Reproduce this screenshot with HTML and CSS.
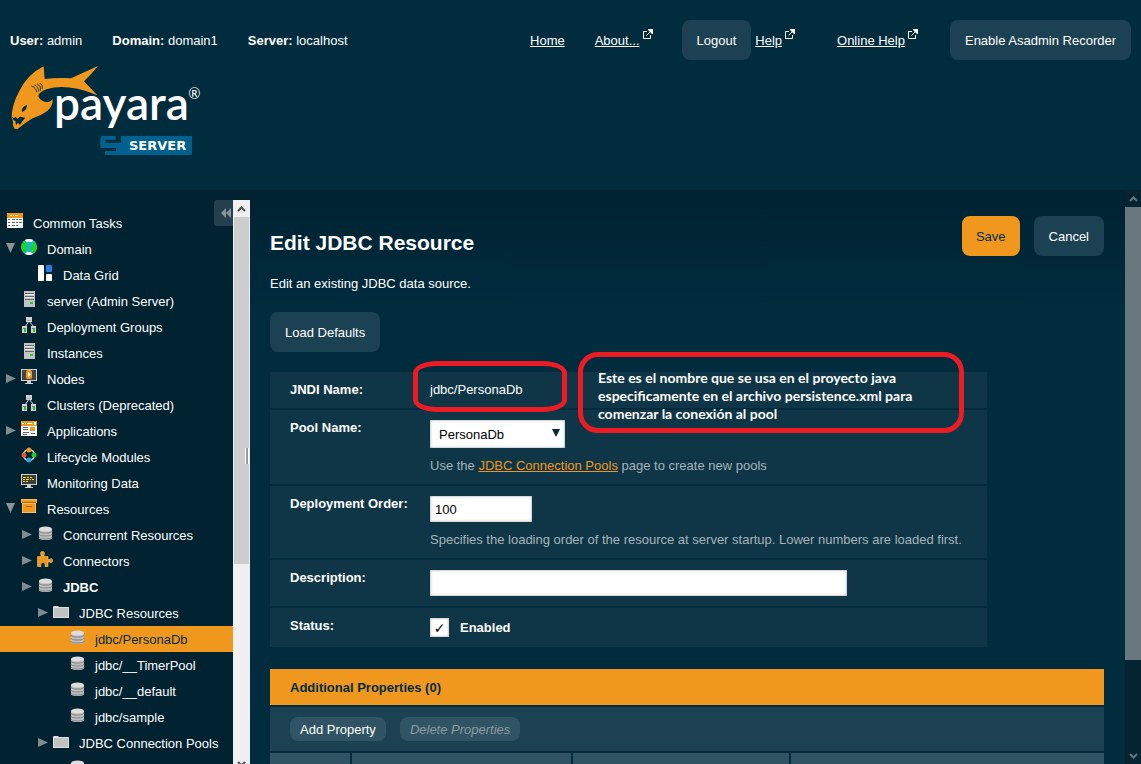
FILE: index.html
```html
<!DOCTYPE html>
<html lang="en">
<head>
<meta charset="utf-8">
<title>Edit JDBC Resource</title>
<link rel="stylesheet" href="styles.css">
</head>
<body>
<svg class="symbols" aria-hidden="true">
  <symbol id="i-tasks" viewBox="0 0 16 16"><path fill="#fff" d="M0 0h16v15H0z"/><path fill="#f0981d" d="M0 0h16v5H0z"/><path fill="#fbd9a0" d="M3 2h2v1H3zM6 2h1v1H6zM8 2h3v1H8z"/><path fill="#666" d="M1 6h2v1H1zM5 6h3v1H5zM9 6h2v1H9zM12 6h3v1h-3zM1 9h2v1H1zM5 9h3v1H5zM9 9h2v1H9zM12 9h3v1h-3zM1 12h2v1H1zM5 12h3v1H5zM9 12h2v1H9z"/></symbol>
  <symbol id="i-globe" viewBox="0 0 16 16"><circle cx="8" cy="8" r="8" fill="#1fb0e8"/><path fill="#18d818" d="M1 5l3-3 3 2-1 3-1 2 2 2-2 3-3-2-2-3zM11 3l2 0 2 3 1 3-2 4-3 1-1-3-1-2 2-2z"/><path fill="#fff" d="M4 1q4-2 8 0l-1 2H5zM4 15q4 2 8 0l-2-2H6z"/></symbol>
  <symbol id="i-grid" viewBox="0 0 16 16"><rect x="1" width="6" height="16" rx="1" fill="#fff"/><rect x="9" width="6" height="7" rx="1" fill="#2a7de1"/><rect x="9" y="9" width="6" height="7" rx="1" fill="#fff"/></symbol>
  <symbol id="i-server" viewBox="0 0 16 16"><path fill="#c4c4c4" d="M3 0h11v16H3z"/><path fill="#666" d="M4 2h9v1H4zM4 5h9v1H4zM4 8h9v1H4z"/><path fill="#eee" d="M4 3h9v1H4zM4 6h9v1H4z"/><path fill="#1fce1f" d="M9 11h3v2H9z"/></symbol>
  <symbol id="i-group" viewBox="0 0 16 16"><path d="M8 4L4 10M8 4l5 6" stroke="#ddd" stroke-width="1" fill="none"/><path fill="#d2d2d2" d="M5 0h6v5H5zM1 9h5v7H1zM10 9h5v7h-5z"/><path fill="#777" d="M2 11h3v1H2zM11 11h3v1h-3z"/><path fill="#aaa" d="M6 3h4v1H6z"/><path fill="#1c1" d="M3 12h2v3H3zM12 12h2v3h-2z"/></symbol>
  <symbol id="i-node" viewBox="0 0 16 16"><path fill="#cfcfcf" d="M0 0h16v12H0zM6 12h4v2h2v1H4v-1h2z"/><path fill="#444" d="M1 1h14v10H1z"/><rect x="5" y="1" width="6" height="9" rx="2" fill="#f0981d"/><path fill="#fff" d="M7 3l3 2.500L7 8z"/></symbol>
  <symbol id="i-app" viewBox="0 0 16 16"><path fill="#fff" d="M0 0h16v15H0z"/><path fill="#f0981d" d="M0 0h16v5H0zM9 6h5v4H9z"/><path fill="#fff" d="M1 2h2v1H1zM4 2h1v1H4zM6 2h5v1H6zM13 1h2v3h-2z"/><path fill="#666" d="M2 6h5v1H2zM2 8h5v1H2zM2 11h6v1H2zM2 13h4v1H2zM10 12h4v1h-4z"/></symbol>
  <symbol id="i-life" viewBox="0 0 16 16"><circle cx="8" cy="8" r="5.500" fill="none" stroke="#ccc" stroke-width="1.500"/><circle cx="8" cy="3" r="2.500" fill="#f0981d"/><circle cx="13" cy="8" r="2.500" fill="#1dce28"/><circle cx="8" cy="13" r="2.500" fill="#20a8e8"/><circle cx="3" cy="8" r="2.500" fill="#f0562a"/></symbol>
  <symbol id="i-monitor" viewBox="0 0 16 16"><path fill="#cfcfcf" d="M0 1h16v11H0zM6 12h4v2h2v1H4v-1h2z"/><path fill="#3d3d3d" d="M1 2h14v9H1z"/><path fill="#ffe000" d="M2 4h3v1H2zM6 4h2v1H6zM9 4h2v1H9zM2 6h2v1H2zM5 6h3v1H5zM9 6h1v1H9zM11 6h2v1h-2zM2 8h2v1H2zM5 8h2v1H5z"/></symbol>
  <symbol id="i-box" viewBox="0 0 16 16"><path fill="#f9bd63" d="M0 0h16v4h-1v10H1V4H0z"/><path fill="#f0981d" d="M1 1h14v2H1zM2 5h12v8H2z"/><path fill="#b06c0c" d="M1 3h14v1H1zM5 7h6v1H5z"/></symbol>
  <symbol id="i-db" viewBox="0 0 16 16"><path fill="#bdbdbd" d="M2 4v9q0 2 6.500 2t6.500-2V4z"/><ellipse cx="8.500" cy="4" rx="6.500" ry="2.500" fill="#dedede"/><path fill="none" stroke="#858585" d="M2 6q0 2 6.500 2T15 6M2 9q0 2 6.500 2T15 9M2 12q0 2 6.500 2t6.500-2"/></symbol>
  <symbol id="i-puzzle" viewBox="0 0 16 16"><path fill="#f0981d" stroke="#fbc77a" stroke-width=".6" d="M.5 5.500H4V4Q2.500.5 5.500.5T7 4v1.500h4v3h1.500Q15.500 6.500 15.500 9.500T12.500 11H11v4.500H8V14q1-2.500-2-2.500T4 14v1.500H.5z"/></symbol>
  <symbol id="i-folder" viewBox="0 0 16 16"><path fill="#dedede" d="M0 4q0-1 1-1h4l1 1h9q1 0 1 1v10H0z"/><path fill="#c2c2c2" d="M1 5h14v9H1z"/></symbol>
  <symbol id="i-ext" viewBox="0 0 10 10"><path fill="none" stroke="#fff" d="M4 2.500H.5v7h7V6M3.500 6.500L8 2"/><path fill="#fff" d="M5 0h5v5H9L5 1z"/></symbol>
  <symbol id="i-down" viewBox="0 0 10 10"><path fill="#8b9499" d="M0 0h9L4.500 10z"/></symbol>
  <symbol id="i-right" viewBox="0 0 10 10"><path fill="#7f8b90" d="M0 1l10 4.500L0 10z"/></symbol>
  <symbol id="i-up" viewBox="0 0 9 6"><path fill="none" stroke="currentColor" stroke-width="2" d="M1 5l3.500-3.500L8 5"/></symbol>
</svg>

<header class="top">
  <div class="bar">
    <dl class="who">
      <div><dt>User:</dt> <dd>admin</dd></div>
      <div><dt>Domain:</dt> <dd>domain1</dd></div>
      <div><dt>Server:</dt> <dd>localhost</dd></div>
    </dl>
    <nav class="links">
      <a href="#">Home</a>
      <a class="ext about" href="#">About...<svg><use href="#i-ext"/></svg></a>
      <button class="btn" type="button">Logout</button>
      <a class="ext help" href="#">Help<svg><use href="#i-ext"/></svg></a>
      <a class="ext online" href="#">Online Help<svg><use href="#i-ext"/></svg></a>
      <button class="btn" type="button">Enable Asadmin Recorder</button>
    </nav>
  </div>
  <svg class="logo" viewBox="30 27 582 282" role="img" aria-label="Payara Server">
    <path fill="#f0981d" d="M131 34L134 72Q175 67 213 70Q252 52 294 33Q272 60 252 79Q270 98 292 121Q262 107 233 101Q178 91 142 102Q116 110 115 124Q120 138 138 141Q151 143 158 132Q160 152 142 168Q120 184 98 190Q72 205 53 222L43 221L38 207L40 206L38 196L35 186Q36 148 58 108Q82 58 131 34Z"/>
    <path fill="#002c3e" d="M65 166Q68 154 81 150Q81 165 67 171ZM36 186L42 189L46 186L52 191L60 185L76 188Q66 198 60 210L54 203L48 211L46 198L41 196Z"/>
    <path fill="none" stroke="#002c3e" stroke-width="2.500" d="M94 93Q109 98 110 111M103 90Q117 95 116 110M111 87Q124 92 121 107M119 85Q130 89 126 102"/>
    <text class="word" x="162" y="194">payara</text>
    <text class="reg" x="565" y="132">®</text>
    <path fill="#00618f" d="M304 243h43v11h-30v9h46v-20h210q3 0 3 3v51q0 3-3 3H315v-12h33v-9h-45q-2 0-2-3v-27q0-3 3-3z"/>
    <text class="server" x="387" y="286">SERVER</text>
  </svg>
</header>

<div class="body">
  <aside class="side">
    <button class="collapse" type="button" aria-label="Collapse"><svg viewBox="0 0 10 10"><path d="M5 0v10L0 5zM10 0v10L5 5z"/></svg></button>
    <ul class="tree">
      <li class="root"><svg class="ico"><use href="#i-tasks"/></svg><a href="#">Common Tasks</a></li>
      <li><svg class="arr"><use href="#i-down"/></svg><svg class="ico"><use href="#i-globe"/></svg><a href="#">Domain</a></li>
      <li class="l2"><svg class="ico"><use href="#i-grid"/></svg><a href="#">Data Grid</a></li>
      <li class="l1"><svg class="ico"><use href="#i-server"/></svg><a href="#">server (Admin Server)</a></li>
      <li class="l1"><svg class="ico"><use href="#i-group"/></svg><a href="#">Deployment Groups</a></li>
      <li class="l1"><svg class="ico"><use href="#i-server"/></svg><a href="#">Instances</a></li>
      <li><svg class="arr"><use href="#i-right"/></svg><svg class="ico"><use href="#i-node"/></svg><a href="#">Nodes</a></li>
      <li class="l1"><svg class="ico"><use href="#i-group"/></svg><a href="#">Clusters (Deprecated)</a></li>
      <li><svg class="arr"><use href="#i-right"/></svg><svg class="ico"><use href="#i-app"/></svg><a href="#">Applications</a></li>
      <li class="l1"><svg class="ico"><use href="#i-life"/></svg><a href="#">Lifecycle Modules</a></li>
      <li class="l1"><svg class="ico"><use href="#i-monitor"/></svg><a href="#">Monitoring Data</a></li>
      <li><svg class="arr"><use href="#i-down"/></svg><svg class="ico"><use href="#i-box"/></svg><a href="#">Resources</a></li>
      <li class="l1"><svg class="arr"><use href="#i-right"/></svg><svg class="ico"><use href="#i-db"/></svg><a href="#">Concurrent Resources</a></li>
      <li class="l1"><svg class="arr"><use href="#i-right"/></svg><svg class="ico"><use href="#i-puzzle"/></svg><a href="#">Connectors</a></li>
      <li class="l1 open"><svg class="arr"><use href="#i-right"/></svg><svg class="ico"><use href="#i-db"/></svg><a href="#">JDBC</a></li>
      <li class="l2"><svg class="arr"><use href="#i-right"/></svg><svg class="ico"><use href="#i-folder"/></svg><a href="#">JDBC Resources</a></li>
      <li class="l4 on"><svg class="ico"><use href="#i-db"/></svg><a href="#">jdbc/PersonaDb</a></li>
      <li class="l4"><svg class="ico"><use href="#i-db"/></svg><a href="#">jdbc/__TimerPool</a></li>
      <li class="l4"><svg class="ico"><use href="#i-db"/></svg><a href="#">jdbc/__default</a></li>
      <li class="l4"><svg class="ico"><use href="#i-db"/></svg><a href="#">jdbc/sample</a></li>
      <li class="l2"><svg class="arr"><use href="#i-right"/></svg><svg class="ico"><use href="#i-folder"/></svg><a href="#">JDBC Connection Pools</a></li>
      <li class="l4"><svg class="ico"><use href="#i-db"/></svg></li>
    </ul>
    <div class="scroll light"><svg class="cap"><use href="#i-up"/></svg><div class="thumb"></div><div class="grip"></div><svg class="cap end"><use href="#i-up"/></svg></div>
  </aside>

  <main class="main">
    <div class="head">
      <h1>Edit JDBC Resource</h1>
      <div class="actions"><button class="btn save" type="button">Save</button><button class="btn" type="button">Cancel</button></div>
    </div>
    <p class="intro">Edit an existing JDBC data source.</p>
    <button class="btn load" type="button">Load Defaults</button>

    <form class="form">
      <div class="row"><span class="lab">JNDI Name:</span><div class="val plain">jdbc/PersonaDb</div></div>
      <div class="row"><label class="lab" for="pool">Pool Name:</label>
        <div class="val"><div class="pick"><select id="pool"><option>PersonaDb</option></select><svg viewBox="0 0 8 8"><path d="M0 0h8L4 8z"/></svg></div>
        <p class="hint">Use the <a href="#">JDBC Connection Pools</a> page to create new pools</p></div></div>
      <div class="row"><label class="lab" for="order">Deployment Order:</label>
        <div class="val"><input class="field short" id="order" type="text" value="100">
        <p class="hint">Specifies the loading order of the resource at server startup. Lower numbers are loaded first.</p></div></div>
      <div class="row"><label class="lab" for="desc">Description:</label>
        <div class="val"><input class="field long" id="desc" type="text"></div></div>
      <div class="row"><span class="lab">Status:</span>
        <div class="val check"><input id="enabled" type="checkbox" checked><label for="enabled">Enabled</label></div></div>
      <div class="mark ring"></div>
      <div class="mark note">Este es el nombre que se usa en el proyecto java<br>especificamente en el archivo persistence.xml para<br>comenzar la conexión al pool</div>
    </form>

    <section class="props">
      <h2>Additional Properties (0)</h2>
      <div class="tools"><button class="mini" type="button">Add Property</button><button class="mini" type="button" disabled>Delete Properties</button></div>
      <div class="cols"><span></span><span></span><span></span><span></span></div>
    </section>
  </main>
  <div class="scroll dark"><svg class="cap"><use href="#i-up"/></svg><div class="thumb"></div><svg class="cap end"><use href="#i-up"/></svg></div>
</div>
</body>
</html>
```

FILE: styles.css
```css
* { box-sizing: border-box; }
body {
  margin: 0; height: 100vh; overflow: hidden;
  display: flex; flex-direction: column;
  background: #002c3e; color: #fff;
  font: 13px/17px "Liberation Sans", Arial, sans-serif;
}
button, input, select { font: inherit; color: inherit; border: 0; margin: 0; }
a { color: inherit; }
svg { display: block; flex: none; }
.symbols { position: absolute; width: 0; height: 0; }

.top { padding: 20px 10px 32px; flex: none; }
.bar { display: flex; justify-content: space-between; align-items: center; }
.who { display: flex; gap: 30px; margin: 0; }
.who dt, .who dd { display: inline; margin: 0; }
.who dt { font-weight: bold; }
.links { display: flex; align-items: center; }
.btn { height: 40px; padding: 0 15px; border-radius: 8px; background: #1c4152; white-space: nowrap; }
.save { background: #f0981d; color: #002c3e; padding: 0 14px; }
.ext { display: flex; }
.ext svg { width: 10px; height: 10px; margin: -3px 0 0 3px; }
.about { margin: 0 29px 0 30px; }
.help { margin: 0 42px 0 4px; }
.online { margin-right: 32px; }
.logo { width: 194px; height: 94px; margin-top: 4px; }
.logo text { fill: #fff; }
.word { font: 600 138px Lato, sans-serif; }
.reg { font: 44px Lato, sans-serif; }
.server { font: bold 39px "DejaVu Sans", sans-serif; }

.body { flex: 1; min-height: 0; display: flex; background: linear-gradient(#002231, #002c3e 120px); }
.side { position: relative; width: 250px; flex: none; display: flex; background: #002231; }
.tree { list-style: none; margin: 0; padding: 20px 0 0; flex: 1; min-width: 0; overflow: hidden; }
.tree li { display: flex; height: 26px; padding-left: 5px; white-space: nowrap; }
.tree a { text-decoration: none; line-height: 28px; margin-left: 10px; }
.ico { width: 16px; height: 16px; margin-top: 3px; }
.arr { width: 10px; height: 10px; margin: 7px 5px 0 1px; }
.tree .root { padding-left: 7px; }
.tree .l1 { padding-left: 21px; }
.tree .l2 { padding-left: 37px; }
.tree .l4 { padding-left: 69px; }
.tree .open { font-weight: bold; }
.tree .on { background: #f0981d; color: #002c3e; }
.collapse { position: absolute; left: 214px; top: 10px; width: 26px; height: 26px; padding: 0 0 0 7px; border-radius: 3px; background: #24404e; }
.collapse svg { width: 10px; height: 10px; fill: #8b9499; }

.scroll { width: 17px; flex: none; display: flex; flex-direction: column; position: relative; }
.cap { width: 9px; height: 6px; margin: 6px auto 5px; }
.end { transform: rotate(180deg); margin-top: auto; }
.light { background: #f0f0f0; color: #505050; margin-top: 10px; }
.light .thumb { height: 347px; background: #cdcdcd; margin: 0 1px; }
.light .end { margin-bottom: -3px; }
.grip { position: absolute; right: 1px; top: 248px; width: 4px; height: 16px; border: solid #fff; border-width: 0 1px; background: #999; }
.dark { width: 16px; background: #052330; color: #69777e; }
.dark .thumb { height: 79%; background: #69777e; }

.main { flex: 1; min-width: 0; overflow: hidden; padding: 26px 21px 0 20px; }
.head { display: flex; justify-content: space-between; }
h1 { font-size: 21px; line-height: 24px; margin: 15px 0 0; }
.actions { display: flex; gap: 14px; }
.intro { margin: 19px 0 20px; }
.load { display: block; }
.form { position: relative; width: 86%; margin: 20px 0 22px; display: grid; gap: 2px; }
.row { display: flex; background: #0f3647; padding: 0 20px; }
.lab { width: 140px; flex: none; padding-top: 9px; font-weight: bold; }
.val { flex: 1; min-width: 0; padding: 10px 0; white-space: nowrap; }
.plain { padding-top: 9px; }
.field, .pick select, .check input { display: block; background: #fff; color: #000; border-radius: 0; box-shadow: inset 0 0 3px #999; }
.field { height: 26px; padding: 0 5px; }
.short { width: 102px; }
.long { width: 417px; max-width: 100%; }
.pick { position: relative; width: 135px; }
.pick select { appearance: none; width: 100%; height: 28px; padding: 0 9px; }
.pick svg { position: absolute; right: 5px; top: 9px; width: 8px; height: 8px; fill: #002c3e; }
.hint { margin: 9px 0 0; color: #a5b4bb; }
.hint a { color: #f0981d; }
.check { display: flex; align-items: center; gap: 11px; font-weight: bold; }
.check input { appearance: none; width: 19px; height: 19px; }
.check input:checked::before { content: "✓"; display: block; text-align: center; font: 14px/20px "DejaVu Sans", sans-serif; }
.mark { position: absolute; border: 5px solid #ed1c24; }
.ring { left: 143px; top: -11px; width: 154px; height: 51px; border-radius: 24px / 12px; }
.note { left: 308px; top: -20px; width: 386px; height: 81px; border-radius: 20px; padding: 12px 15px; font: bold 14px/18px Lato, sans-serif; white-space: nowrap; }

.props { display: grid; gap: 2px; }
.props h2 { margin: 0; padding: 10px 20px 9px; background: #f0981d; color: #002c3e; font-size: 13px; line-height: 17px; }
.tools { display: flex; gap: 14px; padding: 10px 20px; background: #1c4152; }
.mini { height: 24px; padding: 0 10px; border-radius: 8px; background: #305463; }
.mini:disabled { color: #8b9da6; font-style: italic; }
.cols { display: grid; grid-template-columns: 80fr 219fr 216fr 313fr; gap: 2px; }
.cols span { height: 36px; background: #305463; }
```
